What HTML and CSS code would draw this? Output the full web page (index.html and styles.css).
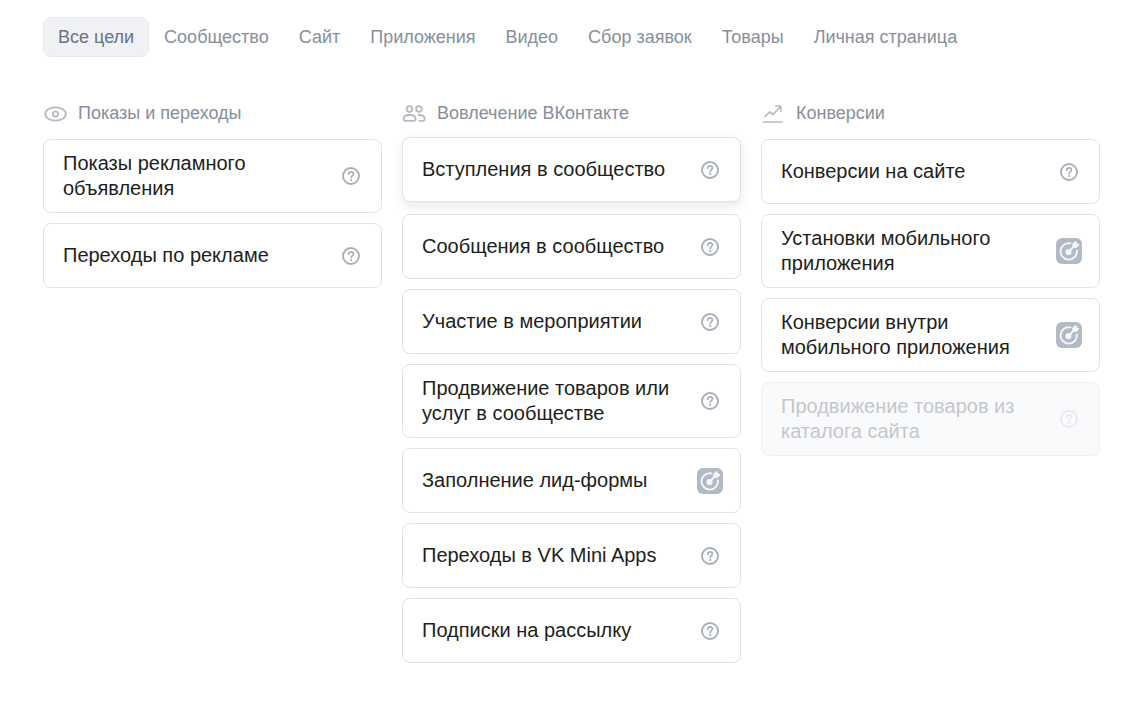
FILE: index.html
```html
<!DOCTYPE html>
<html lang="ru">
<head>
<meta charset="utf-8">
<title>Цели рекламы</title>
<link rel="stylesheet" href="styles.css">
</head>
<body>
<svg class="sprite" aria-hidden="true">
  <symbol id="help" viewBox="0 0 20 20">
    <circle cx="10" cy="10" r="8" fill="none" stroke="currentColor" stroke-width="1.9"/>
    <path d="M7.700 8.200c0-1.400 1-2.300 2.400-2.300s2.300.8 2.300 2.100c0 1.600-2.200 1.800-2.200 3.400" fill="none" stroke="currentColor" stroke-width="1.700" stroke-linecap="round"/>
    <circle cx="10.100" cy="14" r="1.100" fill="currentColor"/>
  </symbol>
  <symbol id="target" viewBox="0 0 26 26">
    <rect width="26" height="26" rx="6" fill="#b2bac5"/>
    <path d="M14.500 5.400A8.200 8.200 0 1 0 20.900 12.500" fill="none" stroke="#f4f6f9" stroke-width="1.900" stroke-linecap="round"/>
    <circle cx="12.500" cy="14" r="3.100" fill="#f4f6f9"/>
    <path d="M13 13.400L18 8.300" stroke="#f4f6f9" stroke-width="2"/>
    <path d="M17 9.300V6.300L19.500 3.800L20.400 5.900L22.500 6.800L20 9.300Z" fill="#f4f6f9" stroke="#f4f6f9" stroke-width="1.500" stroke-linejoin="round"/>
  </symbol>
</svg>
<main class="page">
  <nav class="tabs" aria-label="Категории целей">
    <button class="tab tab-active" type="button">Все цели</button>
    <button class="tab" type="button">Сообщество</button>
    <button class="tab" type="button">Сайт</button>
    <button class="tab" type="button">Приложения</button>
    <button class="tab" type="button">Видео</button>
    <button class="tab" type="button">Сбор заявок</button>
    <button class="tab" type="button">Товары</button>
    <button class="tab" type="button">Личная страница</button>
  </nav>
  <div class="columns">
    <section class="column">
      <h2 class="heading">
        <svg class="heading-icon" viewBox="0 0 24 24" fill="none" stroke="currentColor" stroke-width="1.800"><ellipse cx="12.500" cy="13" rx="10.300" ry="6.600"/><circle cx="12.500" cy="13" r="2.600"/></svg>
        Показы и переходы
      </h2>
      <button class="card" type="button"><span class="label">Показы рекламного объявления</span><svg class="help"><use href="#help"/></svg></button>
      <button class="card" type="button"><span class="label">Переходы по рекламе</span><svg class="help"><use href="#help"/></svg></button>
    </section>
    <section class="column">
      <h2 class="heading">
        <svg class="heading-icon" viewBox="0 0 24 24" fill="none" stroke="currentColor" stroke-width="1.800" stroke-linecap="round"><circle cx="7.500" cy="8" r="2.800"/><circle cx="16.900" cy="8" r="2.800"/><path d="M1.600 18c0-2.600 2.400-4 6-4s6 1.400 6 4c0 1.200-.7 1.900-1.900 1.900H3.500c-1.200 0-1.900-.7-1.900-1.900zM16.500 14c3.800 0 6.200 1.400 6.200 4 0 1.200-.7 1.900-1.900 1.900h-3.300"/></svg>
        Вовлечение ВКонтакте
      </h2>
      <button class="card card-raised" type="button"><span class="label">Вступления в сообщество</span><svg class="help"><use href="#help"/></svg></button>
      <button class="card" type="button"><span class="label">Сообщения в сообщество</span><svg class="help"><use href="#help"/></svg></button>
      <button class="card" type="button"><span class="label">Участие в мероприятии</span><svg class="help"><use href="#help"/></svg></button>
      <button class="card" type="button"><span class="label">Продвижение товаров или услуг в сообществе</span><svg class="help"><use href="#help"/></svg></button>
      <button class="card" type="button"><span class="label">Заполнение лид-формы</span><svg class="target"><use href="#target"/></svg></button>
      <button class="card" type="button"><span class="label">Переходы в VK Mini Apps</span><svg class="help"><use href="#help"/></svg></button>
      <button class="card" type="button"><span class="label">Подписки на рассылку</span><svg class="help"><use href="#help"/></svg></button>
    </section>
    <section class="column">
      <h2 class="heading">
        <svg class="heading-icon" viewBox="0 0 24 24" fill="none" stroke="currentColor" stroke-width="1.700" stroke-linecap="round" stroke-linejoin="round"><path d="M4 15.500l4.500-4.500 3.500 2.500 7.500-8M14.800 5h5v5M2.800 21h18.400"/></svg>
        Конверсии
      </h2>
      <button class="card" type="button"><span class="label">Конверсии на сайте</span><svg class="help"><use href="#help"/></svg></button>
      <button class="card" type="button"><span class="label">Установки мобильного приложения</span><svg class="target"><use href="#target"/></svg></button>
      <button class="card" type="button"><span class="label">Конверсии внутри мобильного приложения</span><svg class="target"><use href="#target"/></svg></button>
      <button class="card" type="button" disabled><span class="label">Продвижение товаров из каталога сайта</span><svg class="help"><use href="#help"/></svg></button>
    </section>
  </div>
</main>
</body>
</html>
```
FILE: styles.css
```css
* { box-sizing: border-box; }

body {
  margin: 0;
  background: #fff;
  color: #1d1e20;
  font-family: "Liberation Sans", Arial, sans-serif;
}

button { font-family: inherit; }

.sprite { display: none; }

.page { padding: 17px 37px 40px 43px; }

.tabs { display: flex; }

.tab {
  height: 40px;
  padding: 0 14px;
  border: 1px solid transparent;
  border-radius: 8px;
  background: none;
  color: #868f9c;
  font-size: 18px;
  line-height: 24px;
  white-space: nowrap;
}

.tab-active {
  border-color: #e6e9ed;
  background: #eff1f5;
  color: #6a737e;
}

.columns {
  display: grid;
  grid-template-columns: repeat(3, 1fr);
  gap: 20px;
  margin-top: 44px;
}

.column {
  display: flex;
  flex-direction: column;
  gap: 10px;
}

.heading {
  display: flex;
  align-items: center;
  gap: 11px;
  height: 24px;
  margin: 0 0 4px;
  color: #868f9c;
  font-size: 18px;
  font-weight: 400;
  line-height: 24px;
}

.heading-icon {
  width: 24px;
  height: 24px;
  color: #b4bbc5;
}

.card {
  display: flex;
  align-items: center;
  justify-content: space-between;
  gap: 20px;
  min-height: 65px;
  padding: 11px 19px;
  border: 1px solid #dfe3e7;
  border-radius: 8px;
  background: #fff;
  color: inherit;
  font-size: 20px;
  line-height: 25px;
  text-align: left;
}

.label { max-width: 250px; }

.card-raised {
  transform: translateY(-2px);
  box-shadow: 0 4px 12px rgba(0, 0, 0, 0.09);
}

.card:disabled {
  border-color: #eff1f4;
  background: #f9fafc;
  color: #c5c7ca;
}

.help {
  flex: none;
  width: 20px;
  height: 20px;
  margin-right: 1px;
  color: #a8afb9;
}

.card:disabled .help { color: #e7e9ec; }

.target {
  flex: none;
  width: 26px;
  height: 26px;
  margin-right: -2px;
}
```
